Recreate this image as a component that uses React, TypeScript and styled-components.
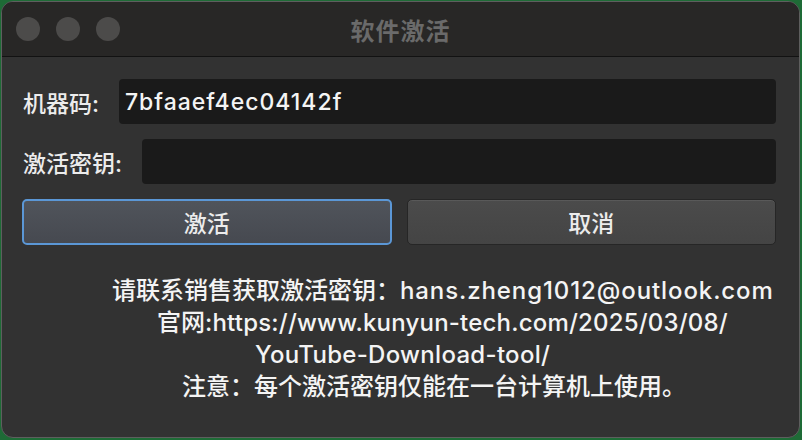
import styled, { createGlobalStyle } from "styled-components";
import { type FC, type ReactNode } from "react";

//global page setup: the desktop shows green behind the rounded window.
const GlobalStyle = createGlobalStyle`
  html, body {
    margin: 0;
    padding: 0;
    background: #1e6b36;
  }
  body {
    font-family: Inter, "Noto Sans CJK SC", sans-serif;
    font-weight: 500;
    -webkit-font-smoothing: antialiased;
  }
`;

//type declarations.
interface FieldRowProps {
  label: string;
  value?: string;
}

interface NoticeLineProps {
  indent: number;
  children: ReactNode;
}

// =====================Window chrome==================================>
const StyledWindow = styled.div`
  box-sizing: border-box;
  width: 799px;
  height: 437px;
  margin: 1px 0 0 1px;
  border: 1px solid #5e5e5e;
  border-radius: 12px;
  overflow: hidden;
  background: #323232;
  display: flex;
  flex-direction: column;
`;

const StyledTitleBar = styled.div`
  height: 54px;
  flex-shrink: 0;
  background: #282726;
  border-bottom: 1px solid #121212;
  display: grid;
  grid-template-columns: 1fr auto 1fr;
  align-items: center;
  padding: 0 14px;
`;

const StyledLights = styled.div`
  display: flex;
  gap: 16px;
`;

const TrafficLight = styled.span`
  width: 24px;
  height: 24px;
  border-radius: 50%;
  background: #4c4b4a;
`;

const StyledTitle = styled.div`
  font-size: 24px;
  font-weight: 700;
  color: #6a6a6a;
  letter-spacing: 1px;
`;

// =====================Form body==================================>
const StyledBody = styled.div`
  flex: 1;
  padding: 22px 23px 0 20px;
  display: flex;
  flex-direction: column;
  gap: 15px;
`;

const StyledRow = styled.div`
  display: flex;
  align-items: center;
  gap: 20px;
`;

const StyledLabel = styled.label`
  font-size: 23px;
  color: #ececec;
  white-space: nowrap;
  padding-left: 1px;
`;

const StyledInput = styled.div`
  flex: 1;
  height: 45px;
  box-sizing: border-box;
  background: #1a1a1a;
  border-radius: 4px;
  padding-left: 6px;
  display: flex;
  align-items: center;
  font-size: 23px;
  letter-spacing: 1px;
  color: #f4f4f4;
`;

const StyledButtons = styled.div`
  display: grid;
  grid-template-columns: 1fr 1fr;
  gap: 15px;
`;

const StyledButton = styled.button<{ $primary?: boolean }>`
  height: 46px;
  box-sizing: border-box;
  border-radius: 5px;
  font-family: inherit;
  font-weight: 500;
  font-size: 23px;
  color: #ececec;
  cursor: pointer;
  border: ${({ $primary }) =>
    $primary ? "2px solid #5b97d6" : "1px solid #262626"};
  background: ${({ $primary }) =>
    $primary
      ? "linear-gradient(#50545b, #464950)"
      : "linear-gradient(#4b4b4b, #444444)"};
  box-shadow: ${({ $primary }) =>
    $primary ? "none" : "inset 0 1px 0 rgba(255,255,255,0.08)"};
`;

// =====================Notice text==================================>
const StyledNotice = styled.div`
  margin: 15px 0 0 90px;
  white-space: nowrap;
  font-size: 24px;
  line-height: 32px;
  color: #f4f4f4;
`;

const StyledNoticeLine = styled.div<{ $indent: number }>`
  padding-left: ${({ $indent }) => $indent}px;
`;

const Latin = styled.span<{ $track?: number }>`
  letter-spacing: ${({ $track }) => $track ?? 0.3}px;
`;

// ================================================================>
const FieldRow: FC<FieldRowProps> = ({ label, value }) => (
  <StyledRow>
    <StyledLabel>{label}</StyledLabel>
    <StyledInput>{value}</StyledInput>
  </StyledRow>
);

const NoticeLine: FC<NoticeLineProps> = ({ indent, children }) => (
  <StyledNoticeLine $indent={indent}>{children}</StyledNoticeLine>
);

export default function App() {
  return (
    <>
      <GlobalStyle />
      <StyledWindow>
        <StyledTitleBar>
          <StyledLights>
            <TrafficLight />
            <TrafficLight />
            <TrafficLight />
          </StyledLights>
          <StyledTitle>软件激活</StyledTitle>
          <span />
        </StyledTitleBar>
        <StyledBody>
          <FieldRow label="机器码:" value="7bfaaef4ec04142f" />
          <FieldRow label="激活密钥:" />
          <StyledButtons>
            <StyledButton $primary>激活</StyledButton>
            <StyledButton>取消</StyledButton>
          </StyledButtons>
          <StyledNotice>
            <NoticeLine indent={0}>
              请联系销售获取激活密钥：
              <Latin $track={0.9}>hans.zheng1012@outlook.com</Latin>
            </NoticeLine>
            <NoticeLine indent={45}>
              官网<Latin $track={0.2}>:https://www.kunyun-tech.com/2025/03/08/</Latin>
            </NoticeLine>
            <NoticeLine indent={143}>
              <Latin>YouTube-Download-tool/</Latin>
            </NoticeLine>
            <NoticeLine indent={70}>
              注意：每个激活密钥仅能在一台计算机上使用。
            </NoticeLine>
          </StyledNotice>
        </StyledBody>
      </StyledWindow>
    </>
  );
}
